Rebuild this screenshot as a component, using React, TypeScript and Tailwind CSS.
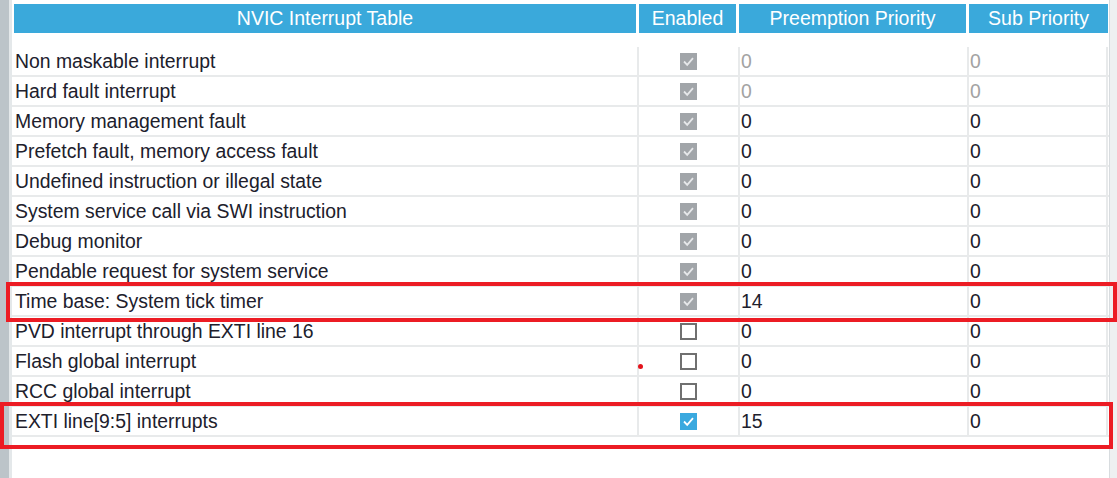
import React from "react";

type Row = {
  name: string;
  state: "locked" | "off" | "on";
  pre: string;
  sub: string;
  muted?: boolean;
};

const ROWS: Row[] = [
  { name: "Non maskable interrupt", state: "locked", pre: "0", sub: "0", muted: true },
  { name: "Hard fault interrupt", state: "locked", pre: "0", sub: "0", muted: true },
  { name: "Memory management fault", state: "locked", pre: "0", sub: "0" },
  { name: "Prefetch fault, memory access fault", state: "locked", pre: "0", sub: "0" },
  { name: "Undefined instruction or illegal state", state: "locked", pre: "0", sub: "0" },
  { name: "System service call via SWI instruction", state: "locked", pre: "0", sub: "0" },
  { name: "Debug monitor", state: "locked", pre: "0", sub: "0" },
  { name: "Pendable request for system service", state: "locked", pre: "0", sub: "0" },
  { name: "Time base: System tick timer", state: "locked", pre: "14", sub: "0" },
  { name: "PVD interrupt through EXTI line 16", state: "off", pre: "0", sub: "0" },
  { name: "Flash global interrupt", state: "off", pre: "0", sub: "0" },
  { name: "RCC global interrupt", state: "off", pre: "0", sub: "0" },
  { name: "EXTI line[9:5] interrupts", state: "on", pre: "15", sub: "0" },
];

function Check({ state }: { state: Row["state"] }) {
  if (state === "off") {
    return <div className="w-[17px] h-[17px] border-2 border-[#707070] bg-white" />;
  }
  const bg = state === "on" ? "bg-[#3aa9df]" : "bg-[#a1a5a9]";
  return (
    <div className={`w-[17px] h-[17px] ${bg} flex items-center justify-center`}>
      <svg width="17" height="17" viewBox="0 0 17 17">
        <polyline
          points="4,8.5 7.2,11.8 13,5.2"
          fill="none"
          stroke={state === "on" ? "#ffffff" : "#e6e8ea"}
          strokeWidth="1.8"
        />
      </svg>
    </div>
  );
}

export default function App() {
  return (
    <div
      className="relative flex w-[1117px] h-[478px] bg-white overflow-hidden"
      style={{ fontFamily: '"Liberation Sans", Arial, sans-serif' }}
    >
      {/* left gutter */}
      <div className="w-[9px] bg-[#bcc4c9]" />
      <div className="w-[3px] bg-[#e4e8ea]" />

      {/* table */}
      <div className="w-[1097px] pt-[4px]">
        <div className="ml-[2px] grid grid-cols-[622px_97px_227px_139px] gap-x-[3px] h-[27px] text-white text-[19.5px]">
          <div className="bg-[#3aa9db] flex items-center justify-center">NVIC Interrupt Table</div>
          <div className="bg-[#3aa9db] flex items-center justify-center">Enabled</div>
          <div className="bg-[#3aa9db] flex items-center justify-center">Preemption Priority</div>
          <div className="bg-[#3aa9db] flex items-center justify-center">Sub Priority</div>
        </div>

        <div className="mt-[16px] text-[19.4px] text-[#20202c]">
          {ROWS.map((r) => (
            <div
              key={r.name}
              className="grid grid-cols-[625px_101px_229px_141px] h-[30px] border-b-2 border-[#e8eaeb]"
            >
              <div className="pl-[3px] pt-[1px] flex items-center leading-none">{r.name}</div>
              <div className="border-l-2 border-[#e8eaeb] flex items-center justify-center">
                <Check state={r.state} />
              </div>
              <div
                className={`border-l-2 border-[#e8eaeb] pl-[1px] pt-[1px] flex items-center leading-none ${
                  r.muted ? "text-[#a3a3a3]" : ""
                }`}
              >
                {r.pre}
              </div>
              <div
                className={`border-l-2 border-r-2 border-[#e8eaeb] pl-[1px] pt-[1px] flex items-center leading-none ${
                  r.muted ? "text-[#a3a3a3]" : ""
                }`}
              >
                {r.sub}
              </div>
            </div>
          ))}
        </div>
      </div>

      {/* scrollbar track */}
      <div className="w-[8px] bg-[#eef0f1] border-l border-[#d8dcdf]" />

      {/* annotations */}
      <div className="absolute left-[6px] top-[282px] w-[1111px] h-[40px] border-4 border-[#ec1c24]" />
      <div className="absolute left-0 top-[402px] w-[1113px] h-[47px] border-[4.5px] border-[#ec1c24]" />
      <div className="absolute left-[638px] top-[364px] w-[5px] h-[5px] rounded-full bg-[#e3141c]" />
    </div>
  );
}
